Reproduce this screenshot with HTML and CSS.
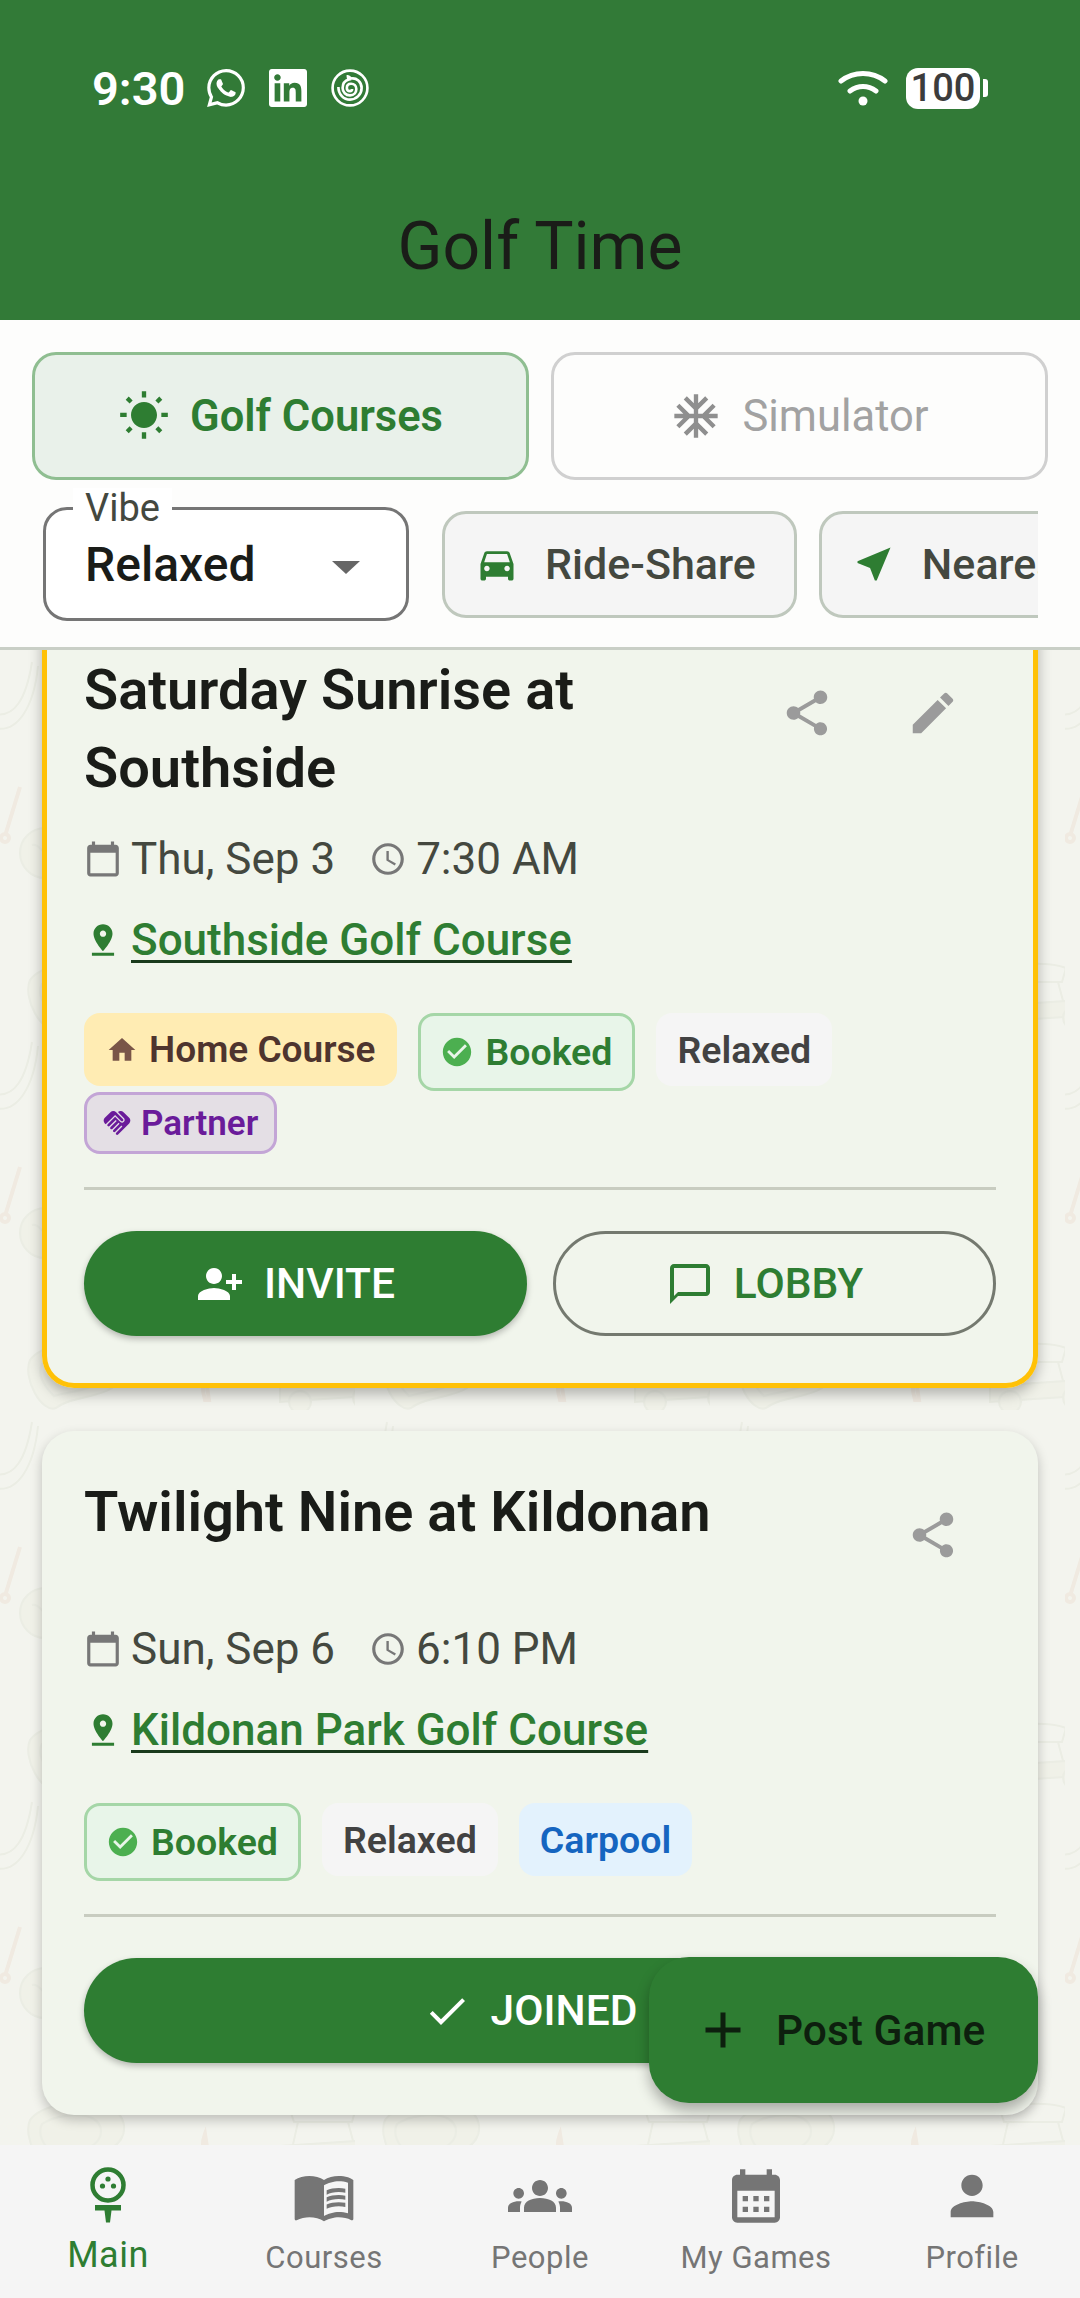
FILE: index.html
```html
<!doctype html>
<html>
    <head>
        <title>Golf Time</title>
        <link rel="stylesheet" href="styles.css">
    </head>
    <body>
        <svg class="doodles" width="1080" height="2298">
            <defs>
                <pattern id="doodle" x="0" y="270" width="355" height="380" patternUnits="userSpaceOnUse">
                    <!-- banana bunker -->
                    <path d="M-6 64c20 4 32-14 38-52M-6 78c24 6 40-22 44-62" />
                    <!-- tee and club -->
                    <path class="club" d="M20 137 5 186" />
                    <circle class="club" cx="5" cy="188" r="4" />
                    <path class="club" d="M205 370c-3-10-3-18 0-26l4 26z" />
                    <!-- ball -->
                    <circle class="fill" cx="45" cy="203" r="25" />
                    <path d="M32 195c8-2 10 10 16 8" />
                    <circle class="fill" cx="163" cy="203" r="25" />
                    <circle class="fill" cx="282" cy="203" r="25" />
                    <path class="club" d="M255 190l8-16-14 4z" />
                    <!-- sand traps -->
                    <path class="fill" d="M30 330c10-14 50-24 76-14 22 8 24 30 6 42-14 10-40 8-56 20-14 6-34-30-26-48z" />
                    <path d="M42 334c12-8 36-12 50-6 12 6 12 20 0 28-12 6-26 6-38 10-8-8-18-20-12-32z" />
                    <!-- cart -->
                    <path d="M290 320c14-8 52-8 66-2l-4 14h-58zM298 332l-8 36M348 332l8 30" />
                    <path class="fill" d="M280 356l92-6v16l-92 6z" />
                    <circle class="fill" cx="300" cy="372" r="11" />
                    <circle class="fill" cx="364" cy="368" r="11" />
                </pattern>
            </defs>
            <rect width="1080" height="2298" fill="url(#doodle)" />
        </svg>

        <header class="app-bar">
            <div class="status-bar">
                <div class="status-left">
                    <span class="clock">9:30</span>
                    <svg class="status-icon" viewBox="0 0 24 24"><path d="M17.472 14.382c-.297-.149-1.758-.867-2.03-.967-.273-.099-.471-.148-.67.15-.197.297-.767.966-.94 1.164-.173.199-.347.223-.644.075-.297-.15-1.255-.463-2.39-1.475-.883-.788-1.48-1.761-1.653-2.059-.173-.297-.018-.458.13-.606.134-.133.298-.347.446-.52.149-.174.198-.298.298-.497.099-.198.05-.371-.025-.52-.075-.149-.669-1.612-.916-2.207-.242-.579-.487-.5-.669-.51-.173-.008-.371-.01-.57-.01-.198 0-.52.074-.792.372-.272.297-1.04 1.016-1.04 2.479 0 1.462 1.065 2.875 1.213 3.074.149.198 2.096 3.2 5.077 4.487.709.306 1.262.489 1.694.625.712.227 1.36.195 1.871.118.571-.085 1.758-.719 2.006-1.413.248-.694.248-1.289.173-1.413-.074-.124-.272-.198-.57-.347m-5.421 7.403h-.004a9.87 9.87 0 01-5.031-1.378l-.361-.214-3.741.982.998-3.648-.235-.374a9.86 9.86 0 01-1.51-5.26c.001-5.45 4.436-9.884 9.888-9.884 2.64 0 5.122 1.03 6.988 2.898a9.825 9.825 0 012.893 6.994c-.003 5.45-4.437 9.884-9.885 9.884m8.413-18.297A11.815 11.815 0 0012.05 0C5.495 0 .16 5.335.157 11.892c0 2.096.547 4.142 1.588 5.945L.057 24l6.305-1.654a11.882 11.882 0 005.683 1.448h.005c6.554 0 11.89-5.335 11.893-11.893a11.821 11.821 0 00-3.48-8.413z" /></svg>
                    <svg class="status-icon" viewBox="0 0 24 24"><path d="M20.447 20.452h-3.554v-5.569c0-1.328-.027-3.037-1.852-3.037-1.853 0-2.136 1.445-2.136 2.939v5.667H9.351V9h3.414v1.561h.046c.477-.9 1.637-1.85 3.37-1.85 3.601 0 4.267 2.37 4.267 5.455v6.286zM5.337 7.433c-1.144 0-2.063-.926-2.063-2.065 0-1.138.92-2.063 2.063-2.063 1.14 0 2.064.925 2.064 2.063 0 1.139-.925 2.065-2.064 2.065zm1.782 13.019H3.555V9h3.564v11.452zM22.225 0H1.771C.792 0 0 .774 0 1.729v20.542C0 23.227.792 24 1.771 24h20.451C23.2 24 24 23.227 24 22.271V1.729C24 .774 23.2 0 22.222 0h.003z" /></svg>
                    <svg class="status-icon spiral" viewBox="0 0 36 36">
                        <circle cx="18" cy="18" r="16.5" />
                        <path d="M7 17c0 7 5 12 11 12s11-5 11-11-5-10-10-9c-1-1-2-2-3-2 0 1 0 2 1 3-4 1-6 4-6 8s3 7 7 7 6-3 6-6-2-5-5-5-4 2-4 4 1 3 3 3 2-1 2-2" />
                    </svg>
                </div>
                <div class="status-right">
                    <svg class="wifi" viewBox="0 0 50 36">
                        <path d="M3 11c13-10 31-10 44 0" />
                        <path d="M12 21c8-6 18-6 26 0" />
                        <circle cx="25" cy="31" r="4.5" />
                    </svg>
                    <span class="battery">100</span>
                    <span class="battery-nub"></span>
                </div>
            </div>
            <h1 class="app-title">Golf Time</h1>
        </header>

        <section class="filters">
            <div class="tabs">
                <button class="tab active">
                    <svg class="icon icon-40" viewBox="0 0 24 24"><path d="M6.76 4.84l-1.8-1.79-1.41 1.41 1.79 1.79 1.42-1.41zM4 10.5H1v2h3v-2zm9-9.95h-2V3.5h2V.55zm7.45 3.91l-1.41-1.41-1.79 1.79 1.41 1.41 1.79-1.79zm-3.21 13.7l1.79 1.8 1.41-1.41-1.8-1.79-1.4 1.4zM20 10.5v2h3v-2h-3zm-8-5c-3.31 0-6 2.69-6 6s2.69 6 6 6 6-2.69 6-6-2.69-6-6-6zm-1 16.95h2V19.5h-2v2.95zm-7.45-3.91l1.41 1.41 1.79-1.8-1.41-1.41-1.79 1.8z" /></svg>
                    Golf Courses
                </button>
                <button class="tab">
                    <svg class="icon icon-40" viewBox="0 0 24 24"><path d="M22 11h-4.17l3.24-3.24-1.41-1.42L15 11h-2V9l4.66-4.66-1.42-1.41L13 6.17V2h-2v4.17L7.76 2.93 6.34 4.34 11 9v2H9L4.34 6.34 2.93 7.76 6.17 11H2v2h4.17l-3.24 3.24 1.41 1.42L9 13h2v2l-4.66 4.66 1.42 1.41L11 17.83V22h2v-4.17l3.24 3.24 1.42-1.41L13 15v-2h2l4.66 4.66 1.41-1.42L17.83 13H22z" /></svg>
                    Simulator
                </button>
            </div>
            <div class="filter-row">
                <div class="select">
                    <span class="select-label">Vibe</span>
                    <span class="select-value">Relaxed</span>
                    <span class="select-arrow"></span>
                </div>
                <button class="filter-chip">
                    <svg class="icon green" viewBox="0 0 24 24"><path d="M18.92 6.01C18.72 5.42 18.16 5 17.5 5h-11c-.66 0-1.21.42-1.42 1.01L3 12v8c0 .55.45 1 1 1h1c.55 0 1-.45 1-1v-1h12v1c0 .55.45 1 1 1h1c.55 0 1-.45 1-1v-8l-2.08-5.99zM6.5 16c-.83 0-1.5-.67-1.5-1.5S5.67 13 6.5 13s1.5.67 1.5 1.5S7.33 16 6.5 16zm11 0c-.83 0-1.5-.67-1.5-1.5s.67-1.5 1.5-1.5 1.5.67 1.5 1.5-.67 1.5-1.5 1.5zM5 11l1.5-4.5h11L19 11H5z" /></svg>
                    Ride-Share
                </button>
                <button class="filter-chip">
                    <svg class="icon green" viewBox="0 0 24 24"><path d="M21 3L3 10.53v.98l6.84 2.65L12.48 21h.98L21 3z" /></svg>
                    Nearest
                </button>
            </div>
        </section>

        <main class="game-list">
            <article class="card card-hot">
                <div class="card-head">
                    <h2 class="card-title">Saturday Sunrise at Southside</h2>
                    <div class="card-tools">
                        <button class="tool"><svg class="icon icon-54" viewBox="0 0 24 24"><path d="M18 16.08c-.76 0-1.44.3-1.96.77L8.91 12.7c.05-.23.09-.46.09-.7s-.04-.47-.09-.7l7.05-4.11c.54.5 1.25.81 2.04.81 1.66 0 3-1.34 3-3s-1.34-3-3-3-3 1.34-3 3c0 .24.04.47.09.7L8.04 9.81C7.5 9.31 6.79 9 6 9c-1.66 0-3 1.34-3 3s1.34 3 3 3c.79 0 1.5-.31 2.04-.81l7.12 4.16c-.05.21-.08.43-.08.65 0 1.61 1.31 2.92 2.92 2.92 1.61 0 2.92-1.31 2.92-2.92s-1.31-2.92-2.92-2.92z" /></svg></button>
                        <button class="tool"><svg class="icon icon-54" viewBox="0 0 24 24"><path d="M3 17.25V21h3.75L17.81 9.94l-3.75-3.75L3 17.25zM20.71 7.04c.39-.39.39-1.02 0-1.41l-2.34-2.34c-.39-.39-1.02-.39-1.41 0l-1.83 1.83 3.75 3.75 1.83-1.83z" /></svg></button>
                    </div>
                </div>
                <div class="when">
                    <svg class="icon icon-38" viewBox="0 0 24 24"><path d="M20 3h-1V1h-2v2H7V1H5v2H4c-1.1 0-2 .9-2 2v16c0 1.1.9 2 2 2h16c1.1 0 2-.9 2-2V5c0-1.1-.9-2-2-2zm0 18H4V8h16v13z" /></svg>
                    <span>Thu, Sep 3</span>
                    <svg class="icon icon-38 clock-icon" viewBox="0 0 24 24"><path d="M11.99 2C6.47 2 2 6.48 2 12s4.47 10 9.99 10C17.52 22 22 17.52 22 12S17.52 2 11.99 2zM12 20c-4.42 0-8-3.58-8-8s3.58-8 8-8 8 3.58 8 8-3.58 8-8 8zm.5-13H11v6l5.25 3.15.75-1.23-4.5-2.67z" /></svg>
                    <span>7:30 AM</span>
                </div>
                <div class="venue">
                    <svg class="icon icon-38 green" viewBox="0 0 24 24"><path d="M18 8c0-3.31-2.69-6-6-6S6 4.69 6 8c0 4.5 6 11 6 11s6-6.5 6-11zm-8 0c0-1.1.9-2 2-2s2 .9 2 2-.89 2-2 2c-1.1 0-2-.9-2-2zM5 20v2h14v-2H5z" /></svg>
                    <a class="venue-link">Southside Golf Course</a>
                </div>
                <div class="chips">
                    <span class="chip chip-home">
                        <svg class="icon icon-32" viewBox="0 0 24 24"><path d="M10 20v-6h4v6h5v-8h3L12 3 2 12h3v8z" /></svg>
                        Home Course
                    </span>
                    <span class="chip chip-booked">
                        <svg class="icon icon-34" viewBox="0 0 24 24"><path d="M12 2C6.48 2 2 6.48 2 12s4.48 10 10 10 10-4.48 10-10S17.52 2 12 2zm-2 15l-5-5 1.41-1.41L10 14.17l7.59-7.59L19 8l-9 9z" /></svg>
                        Booked
                    </span>
                    <span class="chip chip-plain">Relaxed</span>
                    <span class="chip chip-partner">
                        <svg class="icon icon-32" viewBox="0 0 24 24"><path d="M16.48 10.41c-.39.39-1.04.39-1.43 0l-4.47-4.46-7.05 7.04-.66-.63c-1.17-1.17-1.17-3.07 0-4.24l4.24-4.24c1.17-1.17 3.07-1.17 4.24 0L16.48 9c.39.39.39 1.02 0 1.41zm.7-2.12c.78.78.78 2.05 0 2.83-1.27 1.27-2.61.22-2.83 0l-3.76-3.76-5.57 5.57c-.39.39-.39 1.02 0 1.41.39.39 1.02.39 1.42 0l4.62-4.62.71.71-4.62 4.62c-.39.39-.39 1.02 0 1.41.39.39 1.02.39 1.42 0l4.62-4.62.71.71-4.62 4.62c-.39.39-.39 1.02 0 1.41.39.39 1.02.39 1.41 0l4.62-4.62.71.71-4.62 4.62c-.39.39-.39 1.02 0 1.41.39.39 1.02.39 1.41 0l8.32-8.34c1.17-1.17 1.17-3.07 0-4.24l-4.24-4.24c-1.15-1.15-3.01-1.17-4.18-.06l4.17 4.18z" /></svg>
                        Partner
                    </span>
                </div>
                <hr class="divider">
                <div class="actions">
                    <button class="btn btn-solid">
                        <svg class="icon icon-48 flip" viewBox="0 0 24 24"><path d="M15 12c2.21 0 4-1.79 4-4s-1.79-4-4-4-4 1.79-4 4 1.79 4 4 4zm-9-2V7H4v3H1v2h3v3h2v-3h3v-2H6zm9 4c-2.67 0-8 1.34-8 4v2h16v-2c0-2.66-5.33-4-8-4z" /></svg>
                        INVITE
                    </button>
                    <button class="btn btn-line">
                        <svg class="icon icon-48" viewBox="0 0 24 24"><path d="M20 2H4c-1.1 0-2 .9-2 2v18l4-4h14c1.1 0 2-.9 2-2V4c0-1.1-.9-2-2-2zm0 14H6l-2 2V4h16v12z" /></svg>
                        LOBBY
                    </button>
                </div>
            </article>

            <article class="card">
                <div class="card-head">
                    <h2 class="card-title">Twilight Nine at Kildonan</h2>
                    <div class="card-tools">
                        <button class="tool"><svg class="icon icon-54" viewBox="0 0 24 24"><path d="M18 16.08c-.76 0-1.44.3-1.96.77L8.91 12.7c.05-.23.09-.46.09-.7s-.04-.47-.09-.7l7.05-4.11c.54.5 1.25.81 2.04.81 1.66 0 3-1.34 3-3s-1.34-3-3-3-3 1.34-3 3c0 .24.04.47.09.7L8.04 9.81C7.5 9.31 6.79 9 6 9c-1.66 0-3 1.34-3 3s1.34 3 3 3c.79 0 1.5-.31 2.04-.81l7.12 4.16c-.05.21-.08.43-.08.65 0 1.61 1.31 2.92 2.92 2.92 1.61 0 2.92-1.31 2.92-2.92s-1.31-2.92-2.92-2.92z" /></svg></button>
                    </div>
                </div>
                <div class="when">
                    <svg class="icon icon-38" viewBox="0 0 24 24"><path d="M20 3h-1V1h-2v2H7V1H5v2H4c-1.1 0-2 .9-2 2v16c0 1.1.9 2 2 2h16c1.1 0 2-.9 2-2V5c0-1.1-.9-2-2-2zm0 18H4V8h16v13z" /></svg>
                    <span>Sun, Sep 6</span>
                    <svg class="icon icon-38 clock-icon" viewBox="0 0 24 24"><path d="M11.99 2C6.47 2 2 6.48 2 12s4.47 10 9.99 10C17.52 22 22 17.52 22 12S17.52 2 11.99 2zM12 20c-4.42 0-8-3.58-8-8s3.58-8 8-8 8 3.58 8 8-3.58 8-8 8zm.5-13H11v6l5.25 3.15.75-1.23-4.5-2.67z" /></svg>
                    <span>6:10 PM</span>
                </div>
                <div class="venue">
                    <svg class="icon icon-38 green" viewBox="0 0 24 24"><path d="M18 8c0-3.31-2.69-6-6-6S6 4.69 6 8c0 4.5 6 11 6 11s6-6.5 6-11zm-8 0c0-1.1.9-2 2-2s2 .9 2 2-.89 2-2 2c-1.1 0-2-.9-2-2zM5 20v2h14v-2H5z" /></svg>
                    <a class="venue-link">Kildonan Park Golf Course</a>
                </div>
                <div class="chips">
                    <span class="chip chip-booked">
                        <svg class="icon icon-34" viewBox="0 0 24 24"><path d="M12 2C6.48 2 2 6.48 2 12s4.48 10 10 10 10-4.48 10-10S17.52 2 12 2zm-2 15l-5-5 1.41-1.41L10 14.17l7.59-7.59L19 8l-9 9z" /></svg>
                        Booked
                    </span>
                    <span class="chip chip-plain">Relaxed</span>
                    <span class="chip chip-carpool">Carpool</span>
                </div>
                <hr class="divider">
                <div class="actions">
                    <button class="btn btn-solid btn-wide">
                        <svg class="icon icon-48" viewBox="0 0 24 24"><path d="M9 16.17L4.83 12l-1.42 1.41L9 19 21 7l-1.41-1.41z" /></svg>
                        JOINED
                    </button>
                </div>
            </article>
        </main>

        <button class="fab">
            <svg class="icon icon-60" viewBox="0 0 24 24"><path d="M19 13h-6v6h-2v-6H5v-2h6V5h2v6h6v2z" /></svg>
            Post Game
        </button>

        <nav class="bottom-nav">
            <a class="nav-item current">
                <svg class="icon icon-64" viewBox="0 0 64 64">
                    <circle class="tee-ball" cx="32" cy="21" r="15.5" />
                    <circle cx="32" cy="15" r="2.6" />
                    <circle cx="26.5" cy="22" r="2.6" />
                    <circle cx="37.5" cy="22" r="2.6" />
                    <path d="M19 41h26v5.500h-9.500l-1.500 12h-4l-1.500-12H19z" />
                </svg>
                <span>Main</span>
            </a>
            <a class="nav-item">
                <svg class="icon icon-64" viewBox="0 0 24 24"><path d="M21 5c-1.11-.35-2.33-.5-3.500-.5-1.950 0-4.050.4-5.500 1.500-1.450-1.100-3.550-1.500-5.500-1.500S2.450 4.900 1 6v14.650c0 .25.25.5.5.5.1 0 .15-.05.25-.05C3.100 20.450 5.050 20 6.500 20c1.950 0 4.050.4 5.500 1.500 1.350-.85 3.800-1.500 5.500-1.500 1.650 0 3.350.3 4.750 1.050.1.05.15.05.25.05.25 0 .5-.25.5-.5V6c-.6-.45-1.250-.75-2-1zm0 13.500c-1.100-.35-2.300-.5-3.500-.5-1.700 0-4.150.65-5.500 1.500V8c1.350-.85 3.800-1.500 5.500-1.500 1.200 0 2.400.15 3.500.5v11.500z" /><path d="M17.500 10.500c.88 0 1.730.09 2.500.26V9.240c-.79-.15-1.640-.24-2.500-.24-1.700 0-3.240.29-4.500.83v1.660c1.130-.64 2.700-.99 4.500-.99zM13 12.490v1.660c1.130-.64 2.700-.99 4.500-.99.88 0 1.730.09 2.500.26V11.900c-.79-.15-1.640-.24-2.500-.24-1.700 0-3.240.3-4.500.83zM17.500 14.330c-1.700 0-3.240.29-4.500.83v1.660c1.130-.64 2.700-.99 4.500-.99.88 0 1.730.09 2.500.26v-1.520c-.79-.16-1.640-.24-2.500-.24z" /></svg>
                <span>Courses</span>
            </a>
            <a class="nav-item">
                <svg class="icon icon-64" viewBox="0 0 24 24"><path d="M12 12.750c1.630 0 3.070.39 4.240.9 1.080.48 1.760 1.560 1.760 2.730V18H6v-1.610c0-1.180.68-2.260 1.760-2.730 1.170-.52 2.610-.91 4.240-.91zM4 13c1.100 0 2-.9 2-2s-.9-2-2-2-2 .9-2 2 .9 2 2 2zm1.130 1.100c-.37-.06-.74-.1-1.130-.1-.99 0-1.930.21-2.780.58C.48 14.900 0 15.620 0 16.430V18h4.500v-1.610c0-.83.23-1.610.63-2.290zM20 13c1.100 0 2-.9 2-2s-.9-2-2-2-2 .9-2 2 .9 2 2 2zm4 3.430c0-.81-.48-1.530-1.220-1.850-.85-.37-1.790-.58-2.780-.58-.39 0-.76.04-1.130.1.4.68.63 1.460.63 2.290V18H24v-1.570zM12 6c1.660 0 3 1.340 3 3s-1.340 3-3 3-3-1.340-3-3 1.340-3 3-3z" /></svg>
                <span>People</span>
            </a>
            <a class="nav-item">
                <svg class="icon icon-64" viewBox="0 0 24 24"><path d="M19 4h-1V2h-2v2H8V2H6v2H5c-1.110 0-1.990.9-1.990 2L3 20c0 1.100.89 2 2 2h14c1.100 0 2-.9 2-2V6c0-1.100-.9-2-2-2zm0 16H5V10h14v10zM9 14H7v-2h2v2zm4 0h-2v-2h2v2zm4 0h-2v-2h2v2zm-8 4H7v-2h2v2zm4 0h-2v-2h2v2zm4 0h-2v-2h2v2z" /></svg>
                <span>My Games</span>
            </a>
            <a class="nav-item">
                <svg class="icon icon-64" viewBox="0 0 24 24"><path d="M12 12c2.210 0 4-1.790 4-4s-1.790-4-4-4-4 1.790-4 4 1.790 4 4 4zm0 2c-2.670 0-8 1.340-8 4v2h16v-2c0-2.660-5.330-4-8-4z" /></svg>
                <span>Profile</span>
            </a>
        </nav>
    </body>
</html>
```

FILE: styles.css
```css
* {
    box-sizing: border-box;
}

:root {
    --green: #2e7d32;
    --card: #f1f5ec;
}

body {
    margin: 0;
    width: 1080px;
    height: 2298px;
    display: flex;
    flex-direction: column;
    position: relative;
    overflow: hidden;
    background: #f3f4ee;
    color: #1b1c18;
    font-family: Roboto, "Liberation Sans", sans-serif;
}

button {
    font-family: inherit;
    border: 0;
    padding: 0;
    background: none;
}

.icon {
    fill: currentColor;
    flex: none;
    display: block;
}

.icon-32 { width: 32px; height: 32px; }
.icon-34 { width: 34px; height: 34px; }
.icon-38 { width: 38px; height: 38px; }
.icon-40 { width: 40px; height: 40px; }
.icon-48 { width: 48px; height: 48px; }
.icon-54 { width: 54px; height: 54px; }
.icon-60 { width: 60px; height: 60px; }
.icon-64 { width: 64px; height: 64px; }

.green {
    color: var(--green);
}

.flip {
    transform: scaleX(-1);
}

/* faint golf drawings behind everything */
.doodles {
    position: absolute;
    top: 0;
    left: 0;

    path,
    circle {
        fill: none;
        stroke: #ebede4;
        stroke-width: 2;
    }

    .fill {
        fill: #f0f1e8;
    }

    .club {
        stroke: #f0eae1;
        stroke-width: 4;
    }
}

.app-bar {
    height: 320px;
    background: #327a37;
    position: relative;
    flex: none;
    padding: 68px 92px 0 92px;
}

.status-bar {
    display: flex;
    justify-content: space-between;
    align-items: center;
    height: 40px;
}

.status-left,
.status-right {
    display: flex;
    align-items: center;
}

.clock {
    font-size: 47px;
    font-weight: 600;
    color: #fff;
    width: 115px;
}

.status-icon {
    width: 38px;
    height: 38px;
    fill: #fff;
    margin-right: 24px;
}

.spiral {
    fill: none;
    stroke: #fff;
    stroke-width: 2.500;
}

.wifi {
    width: 50px;
    height: 36px;
    fill: #fff;
    margin-right: 18px;

    path {
        fill: none;
        stroke: #fff;
        stroke-width: 5;
        stroke-linecap: round;
    }
}

.battery {
    width: 74px;
    height: 41px;
    border-radius: 12px;
    background: #fff;
    color: #3c3c3c;
    font-size: 38px;
    font-weight: 500;
    text-align: center;
    line-height: 41px;
}

.battery-nub {
    width: 5px;
    height: 18px;
    margin-left: 3px;
    background: #fff;
    border-radius: 0 3px 3px 0;
}

.app-title {
    margin: 0;
    font-size: 66px;
    line-height: 70px;
    font-weight: 400;
    text-align: center;
    color: #1a1c18;
    position: absolute;
    left: 0;
    right: 0;
    top: 212px;
}

.filters {
    height: 330px;
    flex: none;
    background: #fdfdfc;
    border-bottom: 3px solid #c9cfc6;
    padding: 32px 32px 0;
    position: relative;
    z-index: 2;
}

.tabs {
    display: grid;
    grid-template-columns: 497px 497px;
    gap: 22px;
}

.tab {
    height: 128px;
    border: 3px solid #d0d0d0;
    border-radius: 24px;
    display: flex;
    align-items: center;
    justify-content: center;
    gap: 20px;
    font-size: 43.5px;
    color: #a2a2a2;

    .icon {
        width: 52px;
        height: 52px;
        color: #8f8f8f;
    }

    &.active {
        background: #e9f1ea;
        border-color: #8fbe91;
        color: var(--green);
        font-weight: 600;

        .icon {
            color: var(--green);
        }
    }
}

.filter-row {
    display: flex;
    align-items: center;
    gap: 22px;
    margin: 3px 0 0 11px;
    width: 995px;
    overflow: hidden;
    padding-top: 24px;
    height: 138px;
}

.select {
    flex: none;
    width: 366px;
    height: 114px;
    border: 3px solid #757575;
    border-radius: 24px;
    margin-right: 11px;
    padding-left: 39px;
    display: flex;
    align-items: center;
    position: relative;
    background: #fff;
}

.select-label {
    position: absolute;
    left: 27px;
    top: -22px;
    padding: 0 12px;
    background: #fff;
    font-size: 38px;
    line-height: 40px;
    color: #44483f;
}

.select-value {
    font-size: 48px;
    font-weight: 500;
    color: #1a1c18;
}

.select-arrow {
    position: absolute;
    right: 46px;
    top: 51px;
    border: 14px solid transparent;
    border-top: 13px solid #666;
    border-bottom: 0;
}

.filter-chip {
    flex: none;
    height: 107px;
    padding: 0 38px 0 30px;
    background: #f5f5f5;
    border: 3px solid #bfc8bd;
    border-radius: 24px;
    display: flex;
    align-items: center;
    gap: 26px;
    font-size: 43px;
    font-weight: 500;
    color: #44483f;

    .icon {
        width: 44px;
        height: 44px;
    }
}

.game-list {
    flex: 1;
    min-height: 0;
    padding: 0 42px;
    position: relative;
    overflow: hidden;
}

.card {
    background: var(--card);
    border-radius: 32px;
    padding: 42px 42px 52px;
    margin-bottom: 43px;
    box-shadow: 0 5px 12px rgba(0, 0, 0, 0.22);

    &.card-hot {
        margin-top: -41px;
        box-shadow: inset 0 0 0 5px #ffc107, 0 6px 14px rgba(0, 0, 0, 0.28);
    }
}

.card-head {
    display: flex;
    align-items: flex-start;
    justify-content: space-between;
}

.card-title {
    margin: 0;
    width: 640px;
    font-size: 56px;
    line-height: 78px;
    font-weight: 600;
    color: #1a1c18;
}

.card-tools {
    display: flex;
}

.tool {
    width: 126px;
    height: 124px;
    display: grid;
    place-items: center;
    color: #9b9b9b;
}

.when {
    margin-top: 28px;
    height: 48px;
    display: flex;
    align-items: center;
    gap: 9px;
    font-size: 44px;
    font-weight: 450;
    color: #44483f;

    .icon {
        color: #777;
    }

    .clock-icon {
        margin-left: 25px;
    }
}

.venue {
    margin-top: 33px;
    height: 48px;
    display: flex;
    align-items: center;
    gap: 9px;
    font-size: 44px;
    font-weight: 500;
}

.venue-link {
    color: var(--green);
    text-decoration: underline;
    text-decoration-color: #1a3a1c;
    text-underline-offset: 5px;
    text-decoration-thickness: 3px;
}

.chips {
    margin-top: 49px;
    display: flex;
    flex-wrap: wrap;
    align-items: flex-start;
    gap: 1px 21px;
}

.chip {
    display: flex;
    align-items: center;
    border-radius: 16px;
    font-size: 37.5px;
    font-weight: 600;
}

.chip-home {
    height: 73px;
    padding: 0 22px 0 22px;
    gap: 11px;
    background: #ffecb3;
    color: #4e342e;
    font-size: 37px;

    .icon {
        color: #795548;
    }
}

.chip-booked {
    height: 78px;
    padding: 0 20px 0 19px;
    gap: 11px;
    background: #e8f5e9;
    border: 3px solid #a5d6a7;
    color: var(--green);

    .icon {
        color: #4caf50;
    }
}

.chip-plain {
    height: 73px;
    padding: 0 21px;
    background: #f5f5f5;
    color: #424242;
}

.chip-carpool {
    height: 73px;
    padding: 0 21px;
    background: #e3f2fd;
    color: #1565c0;
}

.chip-partner {
    height: 62px;
    padding: 0 16px 0 14px;
    gap: 8px;
    background: #e4dfe5;
    border: 3px solid #c3a5d6;
    font-size: 35px;
    color: #6a1b9a;
}

.divider {
    border: 0;
    height: 3px;
    margin: 33px 0 41px;
    background: #c8ccc0;
}

.actions {
    display: grid;
    grid-template-columns: 1fr 1fr;
    gap: 26px;
}

.btn {
    height: 105px;
    border-radius: 53px;
    padding-right: 20px;
    display: flex;
    align-items: center;
    justify-content: center;
    gap: 20px;
    font-size: 42.5px;
    font-weight: 500;
}

.btn-solid {
    background: var(--green);
    color: #fff;
    box-shadow: 0 3px 6px rgba(0, 0, 0, 0.25);
}

.btn-line {
    border: 3px solid #74796f;
    color: var(--green);
}

.btn-wide {
    grid-column: 1 / -1;
}

.fab {
    position: absolute;
    left: 649px;
    top: 1957px;
    width: 389px;
    height: 146px;
    border-radius: 40px;
    background: var(--green);
    color: #0d1f0e;
    display: flex;
    align-items: center;
    gap: 23px;
    padding-left: 44px;
    font-size: 42.5px;
    font-weight: 500;
    box-shadow: 0 8px 14px rgba(0, 0, 0, 0.3);
    z-index: 3;
}

.bottom-nav {
    height: 153px;
    flex: none;
    background: #f5f5f5;
    display: grid;
    grid-template-columns: repeat(5, 216px);
    position: relative;
    z-index: 2;
}

.nav-item {
    display: flex;
    flex-direction: column;
    align-items: center;
    padding-top: 19px;
    font-size: 31px;
    letter-spacing: 0.5px;
    color: #757575;

    span {
        margin-top: 11px;
    }

    &.current {
        color: var(--green);
        font-size: 36px;

        span {
            margin-top: 6px;
        }
    }
}

.tee-ball {
    fill: none;
    stroke: currentColor;
    stroke-width: 4.500;
}
```
